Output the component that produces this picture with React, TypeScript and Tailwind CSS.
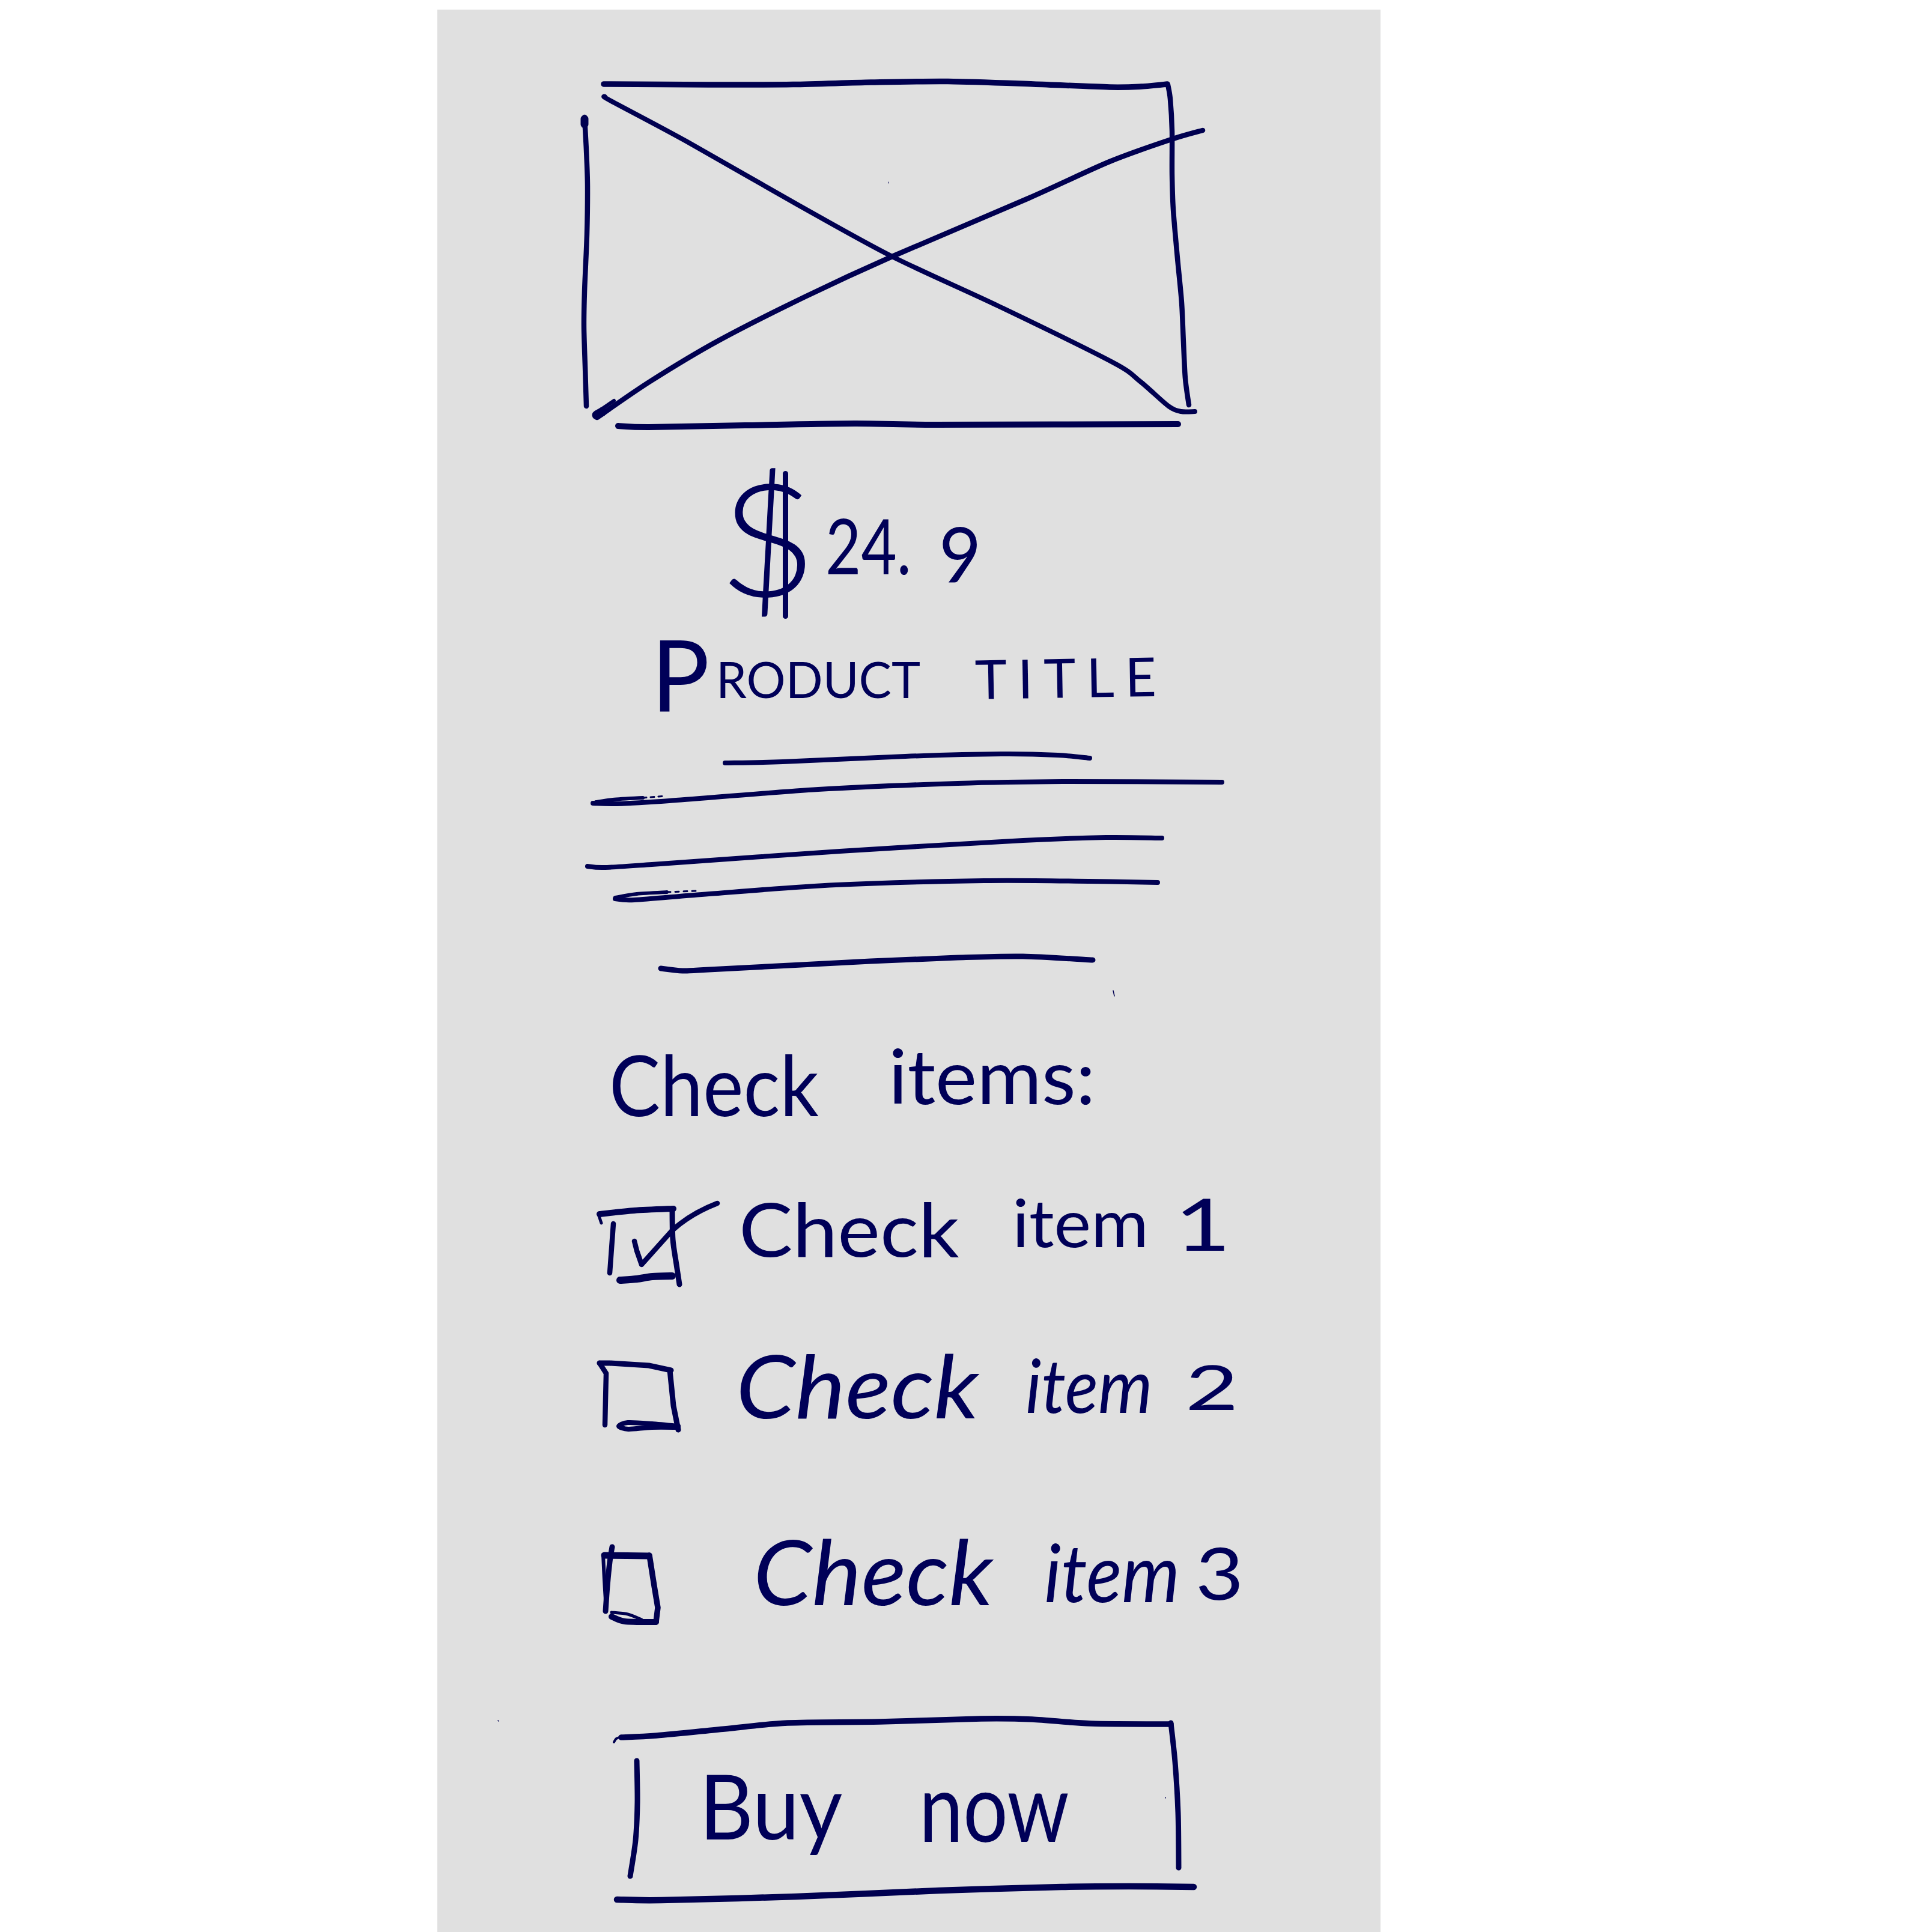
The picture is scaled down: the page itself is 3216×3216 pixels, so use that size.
import React from "react";

type Pt = [number, number];

/** Smooth pen stroke through a list of points (Catmull-Rom to Bezier). */
function penPath(p: Pt[]): string {
  let d = `M${p[0][0]} ${p[0][1]}`;
  for (let i = 0; i < p.length - 1; i++) {
    const a = p[Math.max(i - 1, 0)];
    const b = p[i];
    const c = p[i + 1];
    const e = p[Math.min(i + 2, p.length - 1)];
    const r = (n: number) => Math.round(n * 10) / 10;
    d += `C${r(b[0] + (c[0] - a[0]) / 7)} ${r(b[1] + (c[1] - a[1]) / 7)} ${r(c[0] - (e[0] - b[0]) / 7)} ${r(c[1] - (e[1] - b[1]) / 7)} ${c[0]} ${c[1]}`;
  }
  return d;
}

function Pen({ pts, w = 9 }: { pts: Pt[]; w?: number }) {
  return <path d={penPath(pts)} strokeWidth={w} />;
}

function Sketch({ box, className, children }: { box: string; className: string; children: React.ReactNode }) {
  return (
    <svg viewBox={box} className={`block shrink-0 overflow-visible ${className}`} fill="none" stroke="#000050" strokeLinecap="round" strokeLinejoin="round">
      {children}
    </svg>
  );
}

function Word({ className, children }: { className: string; children: React.ReactNode }) {
  return <span className={`block shrink-0 origin-left whitespace-nowrap leading-none ${className}`}>{children}</span>;
}

function ImagePlaceholder() {
  return (
    <Sketch box="728 16 1570 744" className="h-[744px] w-[1570px]">
      <Pen w={9.5} pts={[[1005, 140], [1180, 141], [1320, 140.5], [1450, 137], [1578, 135.5], [1720, 140], [1847, 145], [1900, 144], [1943, 140]]} />
      <Pen w={8.5} pts={[[1944, 141], [1948, 165], [1951, 218], [1951, 290], [1953, 349], [1960, 430], [1967, 504], [1970, 570], [1973, 630], [1979, 674]]} />
      <Pen w={8.5} pts={[[973, 195], [976, 250], [978, 310], [977, 390], [973, 485], [972, 543], [974, 610], [976, 676]]} />
      <Pen w={13} pts={[[973, 198], [973, 207]]} />
      <Pen w={10} pts={[[1029, 709], [1080, 711], [1240, 708], [1423, 705], [1558, 707], [1961, 706]]} />
      <Pen w={8} pts={[[1007, 161], [1017, 168], [1144, 236], [1330, 342], [1485, 427], [1661, 509], [1852, 603], [1898, 635], [1945, 676], [1966, 685], [1989, 685]]} />
      <Pen w={8.5} pts={[[2002, 217], [1950, 232], [1847, 269], [1712, 330], [1485, 427], [1340, 494], [1196, 567], [1082, 635], [994, 695]]} />
      <Pen w={15} pts={[[1003, 685], [993, 691]]} />
      <Pen w={6} pts={[[1022, 667], [1000, 682]]} />
      <Pen w={1} pts={[[1479, 303], [1479, 305]]} />
    </Sketch>
  );
}

function Price() {
  return (
    <div className="flex h-[280px] items-start">
      <div className="relative">
        <Word className="mt-[6px] ml-[467px] w-[179px] scale-x-[1.14] scale-y-[1.05] text-[250px] font-light">$</Word>
        <span className="absolute top-[24px] left-[575px] h-[246px] w-[9px] rounded-full bg-[#000058]" />
      </div>
      <Word className="mt-[83px] w-[189px] scale-x-[0.8] text-[128px]">24.</Word>
      <Word className="mt-[97px] w-[80px] scale-x-[0.95] text-[128px]">9</Word>
    </div>
  );
}

function Title() {
  return (
    <h1 className="flex h-[180px] items-start">
      <Word className="mt-[-2px] ml-[356px] w-[108px] scale-x-[0.98] text-[165px]">P</Word>
      <Word className="mt-[48px] w-[431px] scale-x-[0.97] text-[84px]">RODUCT</Word>
      <Word className="mt-[44px] w-[310px] rotate-[-1deg] text-[90px] tracking-[0.2em]">TITLE</Word>
    </h1>
  );
}

function Description() {
  return (
    <Sketch box="728 1220 1570 460" className="h-[460px] w-[1570px]">
      <Pen w={8} pts={[[1207, 1270], [1303, 1268], [1507, 1259], [1667, 1255], [1761, 1257], [1814, 1262]]} />
      <Pen w={8} pts={[[987, 1337], [1027, 1338], [1114, 1333], [1362, 1314], [1594, 1304], [1769, 1301], [2034, 1302]]} />
      <Pen w={6} pts={[[992, 1335], [1020, 1331], [1070, 1328]]} />
      <path d="M1070 1328L1108 1325" strokeWidth={3} strokeDasharray="6 7" />
      <Pen w={8} pts={[[978, 1442], [1005, 1444], [1085, 1439], [1398, 1417], [1703, 1399], [1841, 1394], [1934, 1395]]} />
      <Pen w={8} pts={[[1024, 1496], [1056, 1498], [1180, 1488], [1391, 1473], [1638, 1466], [1812, 1467], [1927, 1469]]} />
      <Pen w={6} pts={[[1024, 1494], [1060, 1488], [1110, 1485]]} />
      <path d="M1110 1485L1158 1483" strokeWidth={3} strokeDasharray="6 8" />
      <Pen w={9} pts={[[1100, 1612], [1136, 1616], [1180, 1614], [1449, 1600], [1594, 1594], [1703, 1592], [1819, 1598]]} />
      <Pen w={1.5} pts={[[1853, 1649], [1855, 1658]]} />
    </Sketch>
  );
}

function Heading() {
  return (
    <h2 className="flex h-[260px] items-start">
      <Word className="mt-[54px] ml-[286px] w-[465px] scale-x-[0.91] text-[140px]">Check</Word>
      <Word className="mt-[47px] w-[350px] scale-x-[1.04] text-[126px]">items:</Word>
    </h2>
  );
}

function ItemOne() {
  return (
    <label className="flex h-[240px] items-start">
      <Sketch box="728 1940 502 240" className="h-[240px] w-[502px]">
        <Pen w={10} pts={[[998, 2021], [1056, 2015], [1121, 2012]]} />
        <Pen w={5} pts={[[996, 2021], [1001, 2036]]} />
        <Pen w={9} pts={[[1119, 2012], [1120, 2063], [1126, 2105], [1131, 2138]]} />
        <Pen w={8.5} pts={[[1021, 2037], [1015, 2119]]} />
        <Pen w={12} pts={[[1032, 2131], [1060, 2129], [1086, 2125], [1119, 2124]]} />
        <path d="M1056 2066L1060 2082L1068 2105L1119 2048Q1150 2020 1194 2003" strokeWidth={8.5} />
      </Sketch>
      <Word className="mt-[42px] w-[455px] scale-x-[1.08] text-[124px]">Check</Word>
      <Word className="mt-[38px] w-[270px] scale-x-[1.06] text-[110px]">item</Word>
      <Word className="mt-[36px] w-[90px] scale-x-[1.35] text-[120px]">1</Word>
    </label>
  );
}

function ItemTwo() {
  return (
    <label className="flex h-[280px] items-start">
      <Sketch box="728 2180 497 280" className="h-[280px] w-[497px]">
        <path d="M998 2269L1015 2269L1080 2273L1117 2281" strokeWidth={9} />
        <path d="M998 2269L1009 2286L1007 2372" strokeWidth={8.5} />
        <path d="M1115 2281L1121 2340L1129 2380" strokeWidth={9} />
        <Pen w={8} pts={[[1129, 2374], [1085, 2370], [1045, 2368], [1030, 2374], [1046, 2379], [1085, 2376], [1129, 2376]]} />
      </Sketch>
      <Word className="mt-[53px] w-[482px] scale-x-[1.09] text-[145px] italic">Check</Word>
      <Word className="mt-[62px] w-[266px] scale-x-[0.92] text-[125px] italic">item</Word>
      <Word className="mt-[77px] w-[100px] scale-x-[1.5] text-[102px]">2</Word>
    </label>
  );
}

function ItemThree() {
  return (
    <label className="flex h-[300px] items-start">
      <Sketch box="728 2460 526 300" className="h-[300px] w-[526px]">
        <Pen w={9} pts={[[1019, 2575], [1015, 2600], [1011, 2640], [1008, 2682]]} />
        <Pen w={6} pts={[[1004, 2588], [1006, 2630], [1009, 2680]]} />
        <Pen w={11} pts={[[1006, 2589], [1080, 2590]]} />
        <path d="M1081 2589L1089 2640L1095 2676L1092 2700" strokeWidth={9.5} />
        <Pen w={10} pts={[[1018, 2691], [1040, 2699], [1092, 2700]]} />
        <Pen w={5} pts={[[1018, 2684], [1045, 2687], [1068, 2696]]} />
      </Sketch>
      <Word className="mt-[79px] w-[484px] scale-x-[1.04] text-[150px] italic">Check</Word>
      <Word className="mt-[88px] w-[252px] scale-x-[0.91] text-[135px] italic">item</Word>
      <Word className="mt-[97px] w-[90px] scale-x-[1.15] text-[120px]">3</Word>
    </label>
  );
}

function BuyButton() {
  return (
    <button type="button" className="relative flex h-[456px] w-[1570px] items-start text-left">
      <Sketch box="728 2760 1570 456" className="absolute inset-0 h-[456px] w-[1570px]">
        <Pen w={4} pts={[[1022, 2900], [1026, 2894], [1036, 2891]]} />
        <Pen w={9.5} pts={[[1034, 2892], [1093, 2889], [1206, 2878], [1311, 2868], [1465, 2866], [1633, 2861], [1718, 2862], [1816, 2869], [1949, 2870]]} />
        <Pen w={9} pts={[[1949, 2868], [1956, 2933], [1961, 3017], [1962, 3109]]} />
        <Pen w={9} pts={[[1060, 2931], [1061, 3000], [1058, 3063], [1049, 3123]]} />
        <Pen w={10.5} pts={[[1027, 3162], [1100, 3163], [1325, 3157], [1563, 3147], [1767, 3141], [1879, 3140], [1987, 3141]]} />
        <Pen w={1.5} pts={[[829, 2864], [830, 2865]]} />
        <Pen w={1.5} pts={[[1940, 2992], [1940, 2993]]} />
      </Sketch>
      <Word className="mt-[169px] ml-[436px] w-[366px] scale-x-[0.93] text-[150px]">Buy</Word>
      <Word className="mt-[164px] w-[250px] scale-x-[0.82] text-[160px]">now</Word>
    </button>
  );
}

export default function App() {
  return (
    <div className="flex h-[3216px] w-[3216px] justify-start overflow-hidden bg-white pt-4 pl-[728px]">
      <main className="flex h-[3200px] w-[1570px] flex-col bg-[#e0e0e0] font-['Lato',sans-serif] text-[#000058]">
        <ImagePlaceholder />
        <Price />
        <Title />
        <Description />
        <Heading />
        <ItemOne />
        <ItemTwo />
        <ItemThree />
        <BuyButton />
      </main>
    </div>
  );
}
